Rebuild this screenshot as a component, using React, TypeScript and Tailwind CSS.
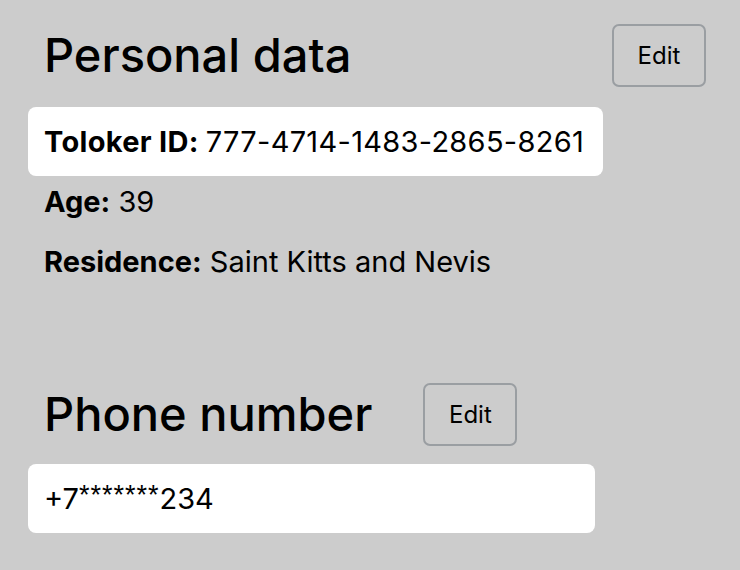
import React from 'react';

function EditButton() {
  return (
    <button className="w-[94px] h-[63px] rounded-[7px] border-2 border-[#9a9ea2] text-[24px] text-black flex items-center justify-center">
      Edit
    </button>
  );
}

export default function App() {
  return (
    <div
      className="w-[740px] h-[570px] bg-[#cccccc] text-black overflow-hidden"
      style={{ fontFamily: 'Inter, "Liberation Sans", sans-serif' }}
    >
      {/* Personal data */}
      <section className="pl-[28px] pt-[24px]">
        <div className="flex items-start justify-between w-[678px]">
          <h2 className="pl-[16px] pt-[3px] text-[47px] font-medium leading-[56px]">Personal data</h2>
          <EditButton />
        </div>
        <div className="mt-[20px] w-[575px] h-[69px] bg-white rounded-[8px] px-[16px] flex items-center text-[29px] tracking-[0.3px]">
          <span className="font-bold mr-[7px]">Toloker ID:</span>
          <span>777-4714-1483-2865-8261</span>
        </div>
        <div className="pl-[16px] mt-[9px] flex flex-col gap-[26px] text-[29px] leading-[34px]">
          <p>
            <span className="font-bold">Age:</span> 39
          </p>
          <p>
            <span className="font-bold">Residence:</span> Saint Kitts and Nevis
          </p>
        </div>
      </section>

      {/* Phone number */}
      <section className="pl-[28px] pt-[104px]">
        <div className="flex items-start gap-[51px]">
          <h2 className="pl-[16px] pt-[3px] text-[47px] font-medium leading-[56px]">Phone number</h2>
          <EditButton />
        </div>
        <div className="mt-[18px] w-[567px] h-[69px] bg-white rounded-[8px] px-[16px] flex items-center text-[29px]">
          +7
          <span style={{ fontFamily: '"Liberation Sans", sans-serif' }} className="text-[27px] tracking-[1px] -translate-y-[3px]">*******</span>
          234
        </div>
      </section>
    </div>
  );
}
